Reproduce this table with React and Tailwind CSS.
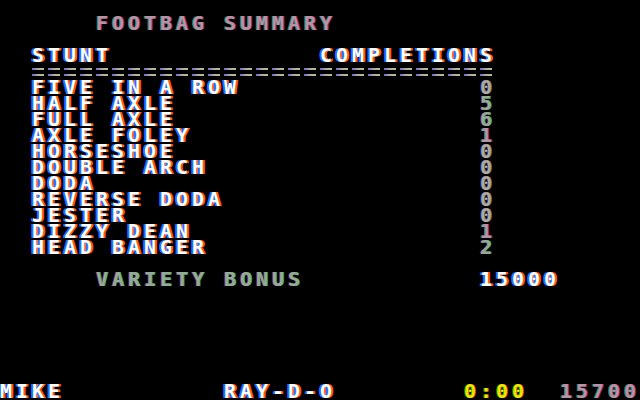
const WHITE = "text-white [text-shadow:-2px_0_#1f6fff,2px_0_#ff5a14]";
const PINK = "text-[#b892a8] [text-shadow:-1px_0_#2c8a5a,1px_0_#a02870]";
const GREEN = "text-[#90ad98] [text-shadow:-1px_0_#8a2a66,1px_0_#2c9a5a]";
const STEEL = "text-[#aeaaa4] [text-shadow:-1px_0_#27307a,1px_0_#6a6a30]";
const YELLOW = "text-[#ece600] [text-shadow:-1px_0_#2a8a10,1px_0_#c04010]";

const STUNTS = [
  ["FIVE IN A ROW", "0"],
  ["HALF AXLE", "5"],
  ["FULL AXLE", "6"],
  ["AXLE FOLEY", "1"],
  ["HORSESHOE", "0"],
  ["DOUBLE ARCH", "0"],
  ["DODA", "0"],
  ["REVERSE DODA", "0"],
  ["JESTER", "0"],
  ["DIZZY DEAN", "1"],
  ["HEAD BANGER", "2"],
];

const digitTint = (d) => {
  if (d === "0") return STEEL;
  if (d === "1") return PINK;
  return GREEN;
};

// one 40-column text line, 16px per cell
const Line = ({ children }) => (
  <div className="h-[16px] leading-[15px] whitespace-pre">{children}</div>
);

export default function App() {
  return (
    <div className="w-[640px] h-[400px] bg-black overflow-hidden flex flex-col font-['DejaVu_Sans_Mono',monospace] font-bold text-[20px] tracking-[3.96px]">
      <Line> </Line>
      <Line>
        {"      "}
        <span className={PINK}>FOOTBAG SUMMARY</span>
      </Line>
      <Line> </Line>
      <Line>
        {"  "}
        <span className={WHITE}>STUNT</span>
        {"             "}
        <span className={WHITE}>COMPLETIONS</span>
      </Line>

      {/* double rule */}
      <div className="h-[16px] flex pl-[32px]">
        {Array.from({ length: 29 }).map((_, i) => (
          <div key={i} className="w-[16px] flex flex-col gap-[4px] pt-[4px]">
            <div className="w-[12px] h-[2px] bg-gradient-to-r from-[#6c70b4] via-[#a8a8b0] to-[#c4bc8c]" />
            <div className="w-[12px] h-[2px] bg-gradient-to-r from-[#6c70b4] via-[#a8a8b0] to-[#c4bc8c]" />
          </div>
        ))}
      </div>

      {STUNTS.map(([name, n]) => (
        <Line key={name}>
          {"  "}
          <span className={WHITE}>{name}</span>
          {" ".repeat(28 - name.length)}
          <span className={digitTint(n)}>{n}</span>
        </Line>
      ))}

      <Line> </Line>
      <Line>
        {"      "}
        <span className={GREEN}>VARIETY BONUS</span>
        {"           "}
        <span className={WHITE}>15000</span>
      </Line>

      <div className="flex-1" />

      <Line>
        <span className={WHITE}>MIKE</span>
        {"          "}
        <span className={WHITE}>RAY-D-O</span>
        {"        "}
        <span className={YELLOW}>0:00</span>
        {"  "}
        <span className={PINK}>15700</span>
      </Line>
    </div>
  );
}
